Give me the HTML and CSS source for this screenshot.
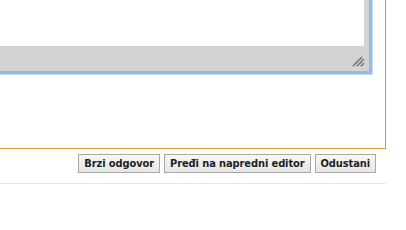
FILE: index.html
```html
<!DOCTYPE html>
<html>
<head>
<meta charset="utf-8">
<link rel="stylesheet" href="styles.css">
</head>
<body>
<div class="page">
  <div class="panel">
    <div class="editor">
      <div class="editor-area"></div>
      <div class="statusbar">
        <svg class="grip" width="13" height="13" viewBox="0 0 13 13">
          <path d="M1 12 L10 3 M5 12 L12 5 M9 12 L12 9" stroke="#555" stroke-width="1.5" fill="none" stroke-dasharray="1.5 0.5"/>
        </svg>
      </div>
    </div>
  </div>
  <div class="actions">
    <button class="btn">Brzi odgovor</button>
    <button class="btn">Pređi na napredni editor</button>
    <button class="btn">Odustani</button>
  </div>
  <div class="separator"></div>
</div>
</body>
</html>
```
FILE: styles.css
```css
html, body {
  margin: 0;
  padding: 0;
  background: #fff;
  overflow: hidden;
}
.page {
  width: 406px;
  height: 230px;
  overflow: hidden;
  font-family: "DejaVu Sans", Verdana, sans-serif;
}
.panel {
  width: 406px;
  margin-left: -20px;
  margin-top: -50px;
  border: 1px solid #cf9f2a;
  border-top: none;
  border-left: none;
  padding: 0 13px 74px 0;
  box-sizing: border-box;
}
.editor {
  background: #d3d3d3;
  border: 3px solid #8fbde9;
  border-top: none;
  border-left: none;
  box-shadow: 1px 1px 0 0 #c9ddf1;
  padding: 0 5px 0 0;
}
.editor-area {
  height: 96px;
  background: #fff;
}
.statusbar {
  height: 25px;
  position: relative;
}
.grip {
  position: absolute;
  right: -1px;
  top: 8px;
}
.actions {
  display: flex;
  justify-content: flex-end;
  gap: 4px;
  margin-top: 5px;
  padding-right: 30px;
}
.btn {
  font-family: "DejaVu Sans Condensed", "DejaVu Sans", Verdana, sans-serif;
  font-stretch: condensed;
  font-weight: bold;
  font-size: 11px;
  letter-spacing: -0.1px;
  color: #222;
  height: 19px;
  padding: 0 5px;
  border: 1px solid #a8a8a8;
  background: linear-gradient(#f7f7f7, #e6e6e6);
  border-radius: 0;
  line-height: 17px;
  margin: 0;
}
.separator {
  width: 386px;
  margin-top: 10px;
  border-top: 1px solid #e6e6e6;
}
```
